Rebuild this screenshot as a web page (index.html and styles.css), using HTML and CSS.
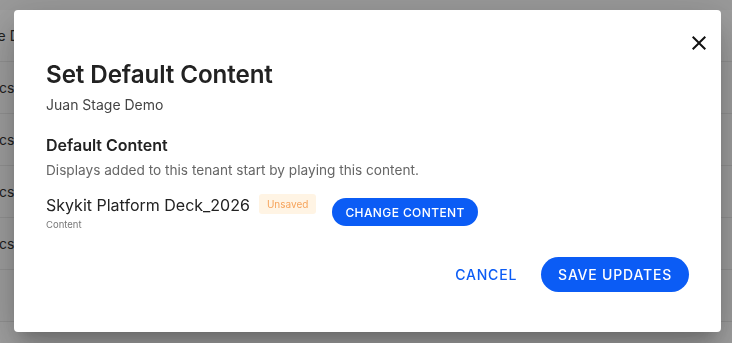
FILE: index.html
```html
<!DOCTYPE html>
<html lang="en">
<head>
  <meta charset="UTF-8">
  <title>Set Default Content</title>
  <link rel="stylesheet" href="styles.css">
</head>
<body>
<div class="page">
  <div class="page-top"></div>
  <div class="rows">
    <div class="row"><span class="cell cell-a">ge Demo</span></div>
    <div class="row"><span class="cell cell-b">tics</span></div>
    <div class="row"><span class="cell cell-b">tics</span></div>
    <div class="row"><span class="cell cell-b">tics</span></div>
    <div class="row"><span class="cell cell-b">tics</span></div>
    <div class="row"></div>
  </div>
</div>
<div class="overlay">
  <div class="dialog">
    <button class="close" aria-label="Close">
      <svg width="24" height="24" viewBox="0 0 24 24"><path d="M19 6.41 17.59 5 12 10.59 6.41 5 5 6.41 10.59 12 5 17.59 6.41 19 12 13.41 17.59 19 19 17.59 13.41 12z" fill="#111"/></svg>
    </button>
    <h1 class="title">Set Default Content</h1>
    <div class="subtitle">Juan Stage Demo</div>
    <h2 class="section">Default Content</h2>
    <p class="desc">Displays added to this tenant start by playing this content.</p>
    <div class="content-row">
      <div class="content-info">
        <div class="content-name">Skykit Platform Deck_2026</div>
        <div class="content-label">Content</div>
      </div>
      <span class="badge">Unsaved</span>
      <button class="btn btn-small">Change Content</button>
    </div>
    <div class="actions">
      <button class="btn-text">Cancel</button>
      <button class="btn btn-large">Save Updates</button>
    </div>
  </div>
</div>
</body>
</html>
```

FILE: styles.css
```css
body { margin: 0; font-family: Inter, "Noto Sans", sans-serif; background: #fff; overflow: hidden; }
.page { height: 343px; }
.page-top { height: 10px; background: #f4f4f4; }
.rows { background: #fcfcfc; }
.row { height: 51px; border-bottom: 1px solid #e8e8e8; display: flex; align-items: center; overflow: hidden; }
.cell { font-size: 14px; color: #333; white-space: nowrap; }
.cell-a { margin-left: -11px; }
.cell-b { margin-left: -9px; }
.overlay { position: fixed; inset: 0; background: rgba(0,0,0,.37); display: flex; align-items: flex-start; padding: 10px 11px 0 14px; }
.dialog { position: relative; flex: 1; height: 322px; box-sizing: border-box; background: #fff; border-radius: 4px; padding: 50px 32px 40px 32px; display: flex; flex-direction: column; box-shadow: 0 11px 15px -7px rgba(0,0,0,.2), 0 24px 38px 3px rgba(0,0,0,.14), 0 9px 46px 8px rgba(0,0,0,.12); }
.close { position: absolute; top: 21px; right: 10px; width: 24px; height: 24px; padding: 0; border: none; background: none; cursor: pointer; }
.close svg { display: block; }
.title { margin: 0; font-size: 24.2px; line-height: 30px; font-weight: 600; color: #222; letter-spacing: -0.1px; }
.subtitle { margin-top: 5px; font-size: 14px; line-height: 20px; color: #444; }
.section { margin: 18px 0 0; font-size: 16px; line-height: 24px; font-weight: 600; color: #222; }
.desc { margin: 3px 0 0; font-size: 13.65px; line-height: 20px; color: #666; }
.content-row { display: flex; align-items: flex-start; margin-top: 13px; }
.content-info { margin-right: 9px; }
.content-name { font-size: 16px; line-height: 24px; color: #222; }
.content-label { font-size: 9.5px; line-height: 12px; color: #777; margin-top: 2px; }
.badge { margin-top: 1px; height: 20px; line-height: 20px; padding: 0 8px; font-size: 10px; color: #f6a45c; background: #fff4e4; border-radius: 3px; }
.btn { border: none; background: #0b5cf5; color: #fff; font-family: inherit; text-transform: uppercase; border-radius: 999px; cursor: pointer; }
.btn-small { margin-left: 16px; margin-top: 5px; height: 28px; padding: 0 13px; font-size: 12px; font-weight: 500; letter-spacing: 0.4px; }
.actions { margin-top: auto; display: flex; justify-content: flex-end; align-items: center; gap: 24px; }
.btn-text { border: none; background: none; padding: 0; font-family: inherit; font-size: 14px; font-weight: 500; color: #0b5cf5; text-transform: uppercase; letter-spacing: 0.8px; cursor: pointer; }
.btn-large { height: 35px; padding: 0 17px; font-size: 14px; font-weight: 500; letter-spacing: 0.8px; }
```
